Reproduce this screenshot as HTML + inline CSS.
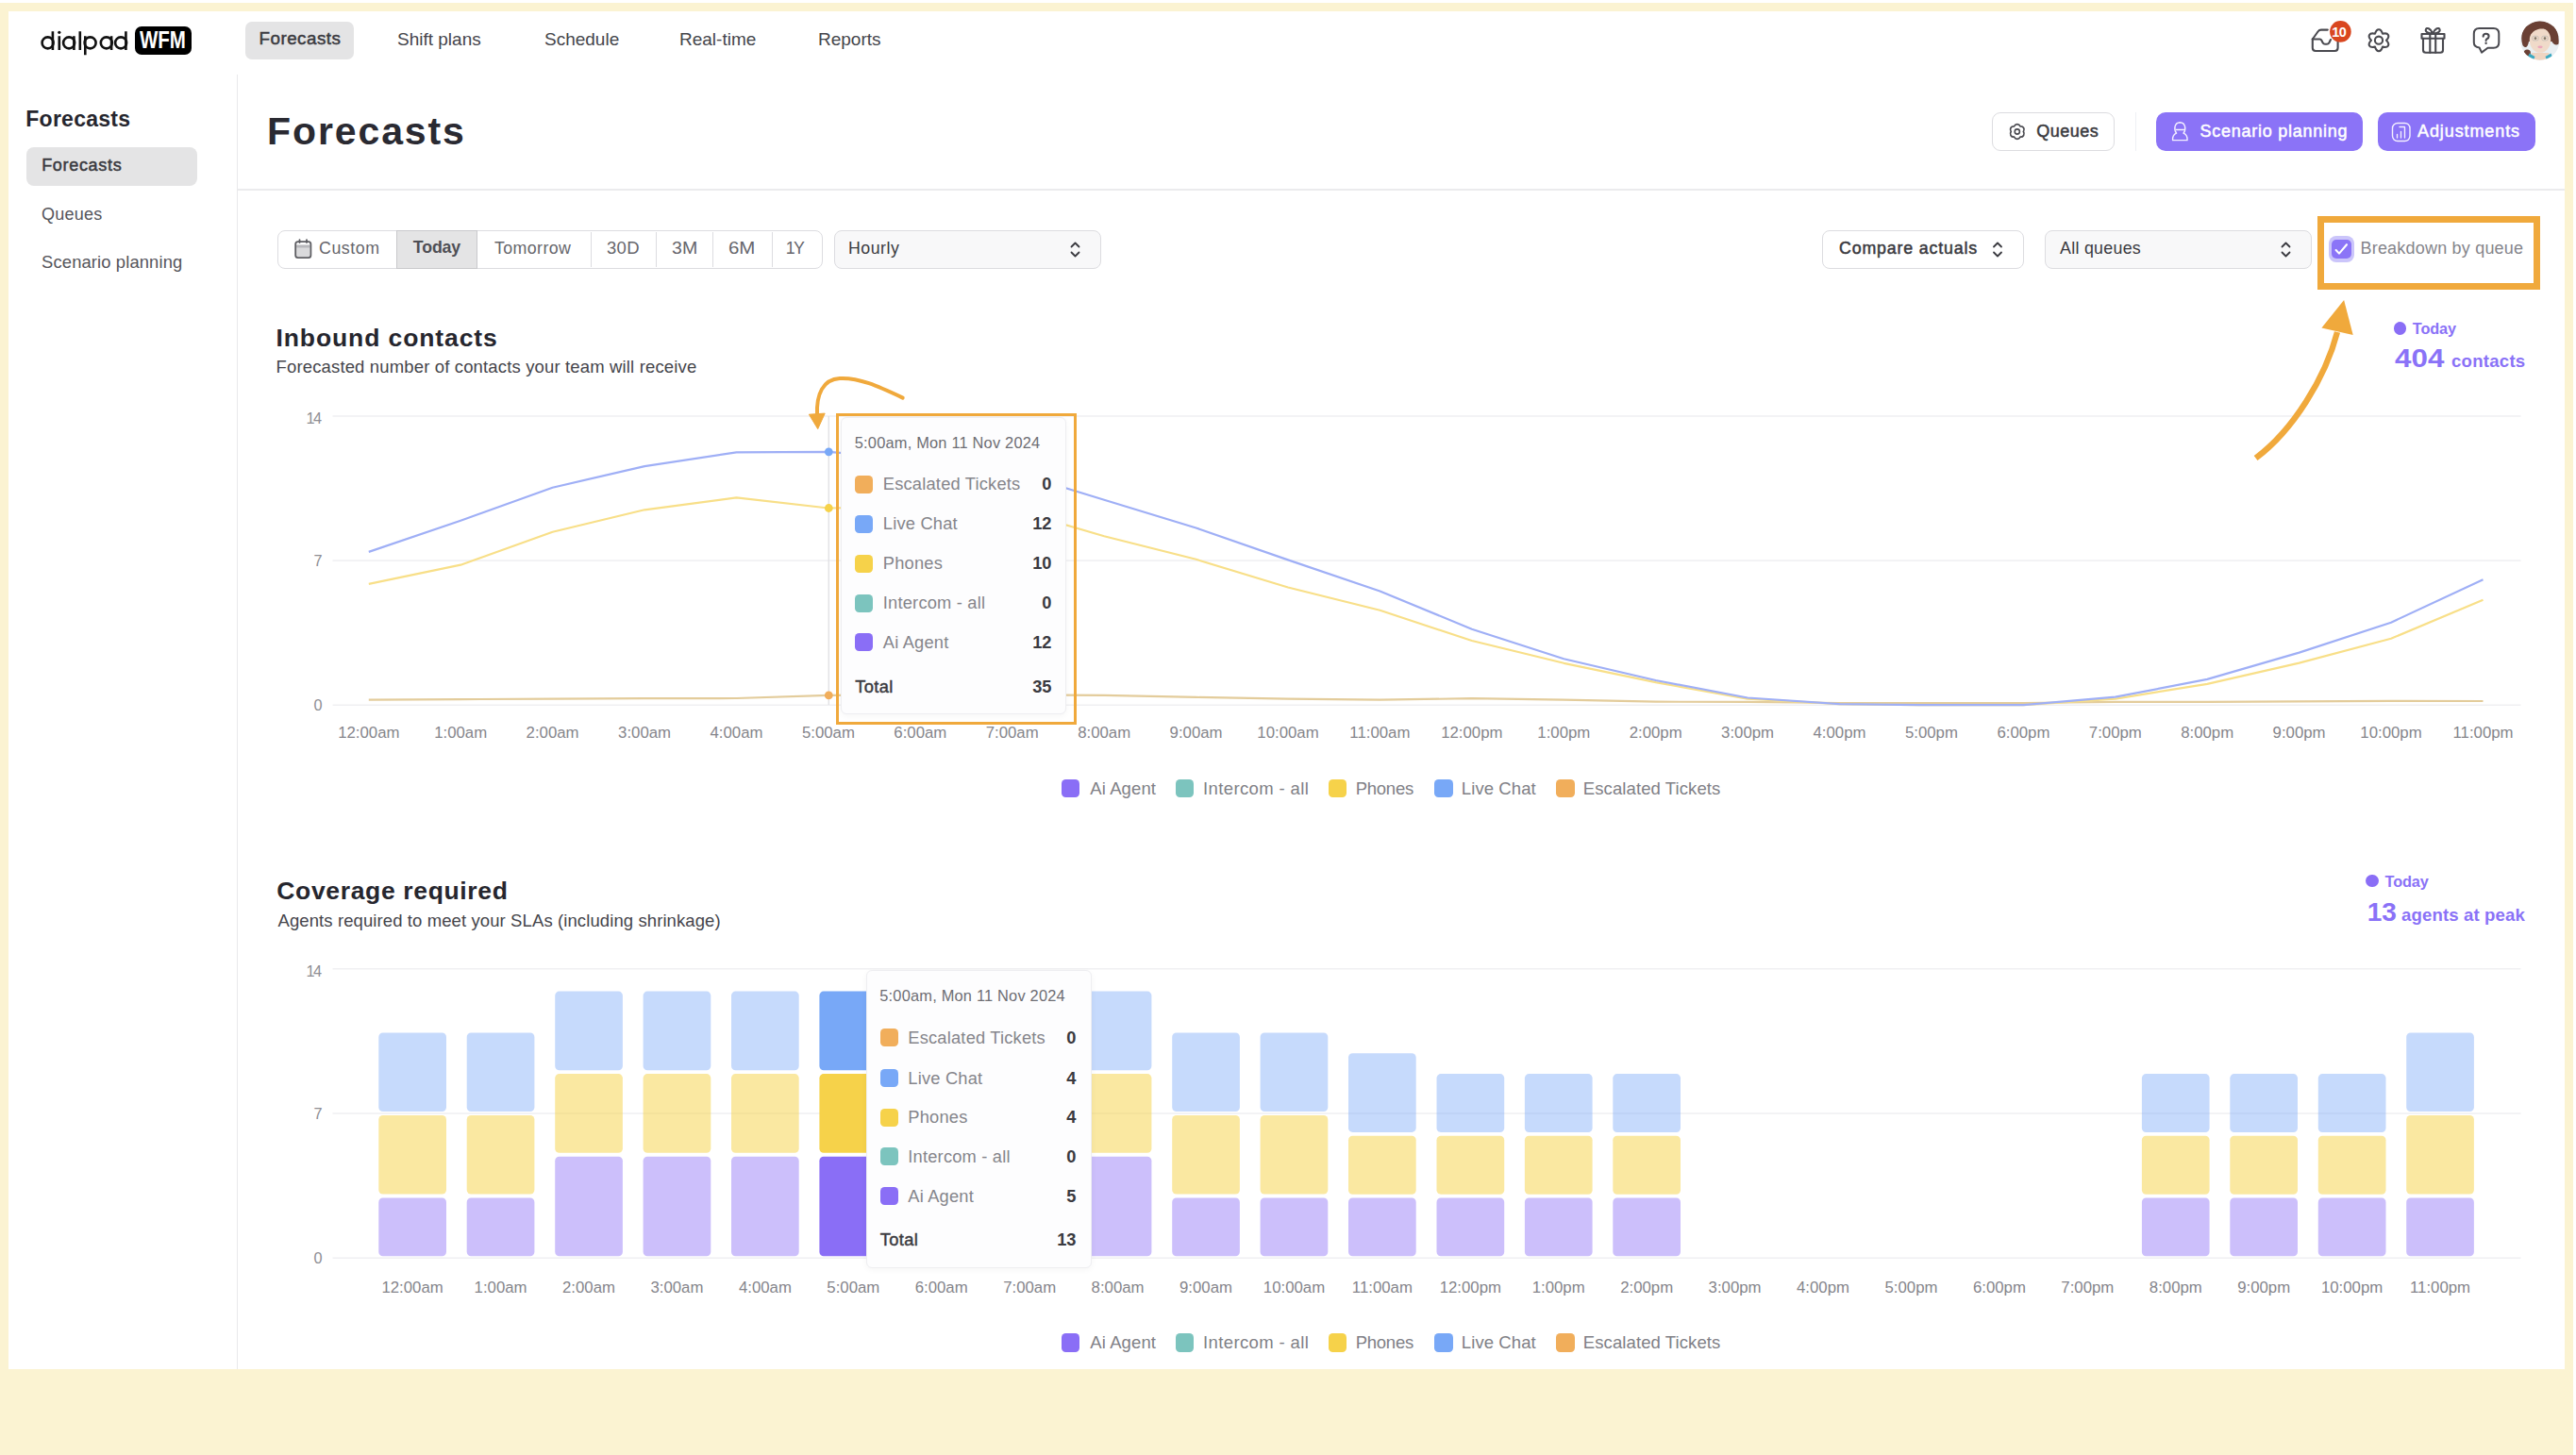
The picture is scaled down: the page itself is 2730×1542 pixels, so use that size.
<!DOCTYPE html><html><head><meta charset='utf-8'><title>Forecasts</title><style>
*{margin:0;padding:0;box-sizing:border-box}
html,body{width:2730px;height:1542px;overflow:hidden;background:#fff;font-family:"Liberation Sans",sans-serif}
.t{position:absolute;white-space:nowrap;line-height:1}
.r{position:absolute}
svg{position:absolute;left:0;top:0;overflow:visible}
</style></head><body><div class="r" style="left:0px;top:3px;width:2727px;height:1539px;background:#FBF3D2"></div>
<div class="r" style="left:9px;top:12px;width:2709px;height:1439px;background:#fff"></div>
<svg width="2730" height="1542"><g fill="none" stroke="#111" stroke-width="2.6"><circle cx="50.6" cy="45.4" r="6.0"/><circle cx="73.1" cy="45.4" r="6.0"/><circle cx="95.6" cy="45.4" r="6.0"/><circle cx="112.8" cy="45.4" r="6.0"/><circle cx="128.1" cy="45.4" r="6.0"/><path d="M55.9,33.2 L55.9,52.9 M62.8,38.2 L62.8,52.9 M78.4,38.2 L78.4,52.9 M84.8,33.2 L84.8,52.9 M90.3,38.2 L90.3,58.2 M118.1,38.2 L118.1,52.9 M133.4,33.2 L133.4,52.9"/></g><circle cx="62.8" cy="34.3" r="1.6" fill="#111"/></svg>
<div class="r" style="left:142.5px;top:27.5px;width:60.5px;height:30.5px;background:#000;border-radius:7px"></div>
<div class="t" style="left:148.0px;top:30.4px;font-size:25px;color:#fff;font-weight:700;transform:scaleX(0.82);transform-origin:0 0;">WFM</div>
<div class="r" style="left:259.5px;top:22.5px;width:115.5px;height:40.5px;background:#E4E4E5;border-radius:7px"></div>
<div class="t" style="left:274.5px;top:32.4px;font-size:18.8px;color:#3a3a40;letter-spacing:0.5px;-webkit-text-stroke:0.5px #3a3a40;">Forecasts</div>
<div class="t" style="left:421.0px;top:32.2px;font-size:19px;color:#45454b;">Shift plans</div>
<div class="t" style="left:577.0px;top:32.2px;font-size:19px;color:#45454b;">Schedule</div>
<div class="t" style="left:720.0px;top:32.2px;font-size:19px;color:#45454b;">Real-time</div>
<div class="t" style="left:867.0px;top:32.2px;font-size:19px;color:#45454b;">Reports</div>
<svg width="2730" height="1542"><g fill="none" stroke="#4a4a50" stroke-width="2.1" stroke-linecap="round" stroke-linejoin="round"><path d="M2450.8,41.5 L2450.8,50.8 Q2450.8,54 2454,54 L2474.4,54 Q2477.6,54 2477.6,50.8 L2477.6,43"/><path d="M2450.8,41.5 L2456.5,33.5 Q2457.8,31.6 2460,31.6 L2466.8,31.6"/><path d="M2450.8,41.5 L2458.6,41.5 Q2459.6,41.5 2460.2,42.6 L2461.6,45.3 Q2462.4,46.8 2464,46.8 L2466,46.8 Q2467.6,46.8 2468.4,45.3 L2470,42"/><path d="M2517.00,35.77 C2518.77,29.69 2523.23,29.69 2525.00,35.77 C2531.15,34.26 2533.38,38.13 2529.00,42.70 C2533.38,47.27 2531.15,51.14 2525.00,49.63 C2523.23,55.71 2518.77,55.71 2517.00,49.63 C2510.85,51.14 2508.62,47.27 2513.00,42.70 C2508.62,38.13 2510.85,34.26 2517.00,35.77 Z" stroke-width="2.1"/><circle cx="2521" cy="42.7" r="4.1"/><path d="M2566.5,36 L2590.5,36 L2590.5,40.8 L2566.5,40.8 Z"/><path d="M2568,40.8 L2568,53 Q2568,55.8 2570.8,55.8 L2586.2,55.8 Q2589,55.8 2589,53 L2589,40.8"/><path d="M2575.3,36 L2575.3,55.8 M2581.2,36 L2581.2,55.8"/><path d="M2578.2,35.5 C2576,30 2571.5,28.5 2570.8,31.5 C2570.2,34 2574,35.5 2578.2,35.5 C2582.4,35.5 2586.2,34 2585.6,31.5 C2584.9,28.5 2580.4,30 2578.2,35.5"/><path d="M2627.5,30 L2642.6,30 Q2648.3,30 2648.3,35.7 L2648.3,45 Q2648.3,50.7 2642.6,50.7 L2636.5,50.7 L2630,55.6 L2627.6,50.5 Q2621.8,49.8 2621.8,45 L2621.8,35.7 Q2621.8,30 2627.5,30 Z" stroke-width="2"/><path d="M2631.6,38.6 Q2631.8,35.8 2634.6,35.8 Q2637.6,35.8 2637.6,38.5 Q2637.6,40.3 2635.6,41.2 Q2634.6,41.8 2634.6,43" stroke-width="2.1"/></g><circle cx="2634.6" cy="45.8" r="1.2" fill="#4a4a50"/><circle cx="2480.4" cy="33.4" r="11.3" fill="#D9461F"/></svg>
<div class="t" style="left:2471.2px;top:26.6px;font-size:14.5px;color:#fff;font-weight:700;letter-spacing:-0.6px;">10</div>
<svg width="2730" height="1542"><defs><clipPath id="av"><circle cx="2691.8" cy="43" r="20.7"/></clipPath></defs><g clip-path="url(#av)"><rect x="2670" y="22" width="44" height="44" fill="#E9EFF2"/><path d="M2673.5,48 C2669.5,37 2675,23.5 2690,22.3 C2705,21.8 2713,31 2711.5,46.5 C2709.5,48.5 2706,47.5 2704.5,44 L2680,44 C2679,50 2676.5,52 2673.5,48 Z" fill="#6A4034"/><circle cx="2678.3" cy="56" r="3.6" fill="#6A4034"/><path d="M2680,66 L2683,56 L2701,56 L2705,66 Z" fill="#EFD5C2"/><path d="M2677,66 L2680.5,56.5 L2686.5,60 L2684,66 Z" fill="#3BA9C2"/><path d="M2707,66 L2703.5,56.5 L2697.5,60 L2700,66 Z" fill="#3BA9C2"/><ellipse cx="2692" cy="42.5" rx="11.2" ry="13.3" fill="#F0DAC9"/><path d="M2679.8,40 C2679,30 2685,26.5 2692,27 C2698,27.3 2703.5,30 2704.3,38 C2702.5,33 2699,30.6 2694,30.6 C2688,30.6 2684,33 2679.8,40 Z" fill="#6A4034"/><g fill="none" stroke="#C4BEB8" stroke-width="0.9"><rect x="2683.8" y="38.3" width="6.4" height="4.6" rx="1.6"/><rect x="2693.8" y="38.3" width="6.4" height="4.6" rx="1.6"/></g><circle cx="2687" cy="40.6" r="1.3" fill="#7d7566"/><circle cx="2697" cy="40.6" r="1.3" fill="#7d7566"/><ellipse cx="2692" cy="49.8" rx="2.7" ry="1.4" fill="#EDA7BC"/></g></svg>
<div class="r" style="left:250.8px;top:79px;width:1.1999999999999886px;height:1372px;background:#E9E9EB"></div>
<div class="t" style="left:27.3px;top:114.8px;font-size:23px;color:#26262e;font-weight:700;letter-spacing:0.25px;">Forecasts</div>
<div class="r" style="left:28px;top:155.5px;width:181px;height:41.0px;background:#E4E4E5;border-radius:8px"></div>
<div class="t" style="left:44.2px;top:166.0px;font-size:18px;color:#3a3a40;letter-spacing:0.68px;-webkit-text-stroke:0.5px #3a3a40;">Forecasts</div>
<div class="t" style="left:44.1px;top:218.1px;font-size:18px;color:#55555b;letter-spacing:0.2px;">Queues</div>
<div class="t" style="left:44.1px;top:268.7px;font-size:18.4px;color:#55555b;letter-spacing:0.12px;">Scenario planning</div>
<div class="r" style="left:252px;top:200px;width:2466px;height:1.5px;background:#EBEBED"></div>
<div class="t" style="left:283.0px;top:119.3px;font-size:41px;color:#2a2a32;font-weight:700;letter-spacing:1.9px;">Forecasts</div>
<div class="r" style="left:2111px;top:119.2px;width:130px;height:41.10000000000001px;border:1.5px solid #DCDCE0;border-radius:9px;background:#fff"></div>
<svg width="2730" height="1542"><path d="M2134.50,133.78 C2136.05,130.88 2139.55,130.88 2141.10,133.78 C2144.39,133.67 2146.14,136.70 2144.40,139.50 C2146.14,142.30 2144.39,145.33 2141.10,145.22 C2139.55,148.12 2136.05,148.12 2134.50,145.22 C2131.21,145.33 2129.46,142.30 2131.20,139.50 C2129.46,136.70 2131.21,133.67 2134.50,133.78 Z" fill="none" stroke="#4a4a50" stroke-width="1.7"/><circle cx="2137.8" cy="139.5" r="2.6" fill="none" stroke="#4a4a50" stroke-width="1.6"/></svg>
<div class="t" style="left:2158.2px;top:129.7px;font-size:18px;color:#3a3a40;letter-spacing:0.5px;-webkit-text-stroke:0.5px #3a3a40;">Queues</div>
<div class="r" style="left:2262.5px;top:119px;width:1.5px;height:41px;background:#EEF0F4"></div>
<div class="r" style="left:2285px;top:119px;width:219px;height:41.400000000000006px;background:#8B73F7;border-radius:10px"></div>
<div class="r" style="left:2519.5px;top:119px;width:167.5px;height:41.400000000000006px;background:#8B73F7;border-radius:10px"></div>
<div class="t" style="left:2331.5px;top:129.7px;font-size:18px;color:#fff;letter-spacing:0.74px;-webkit-text-stroke:0.5px #fff;">Scenario planning</div>
<div class="t" style="left:2562.0px;top:129.7px;font-size:18px;color:#fff;letter-spacing:0.9px;-webkit-text-stroke:0.5px #fff;">Adjustments</div>
<svg width="2730" height="1542"><g fill="none" stroke="#F4F0FF" stroke-width="1.4" stroke-linejoin="round" stroke-linecap="round"><path d="M2306.6,141.2 C2303.6,137.5 2304.2,130 2310.3,129.7 C2316.4,130 2317,137.5 2314,141.2 C2317.6,142.8 2318.3,145.8 2318,148.6 L2302.6,148.6 C2302.3,145.8 2303,142.8 2306.6,141.2 Z"/><path d="M2306.2,137.5 L2314.4,137.5"/></g></svg>
<svg width="2730" height="1542"><g fill="none" stroke="#F4F0FF" stroke-width="1.4" stroke-linecap="round"><rect x="2535.5" y="130.5" width="18.5" height="19" rx="5.5"/><path d="M2540.5,146 L2540.5,142.5 M2544.5,146 L2544.5,139.5 M2548.5,146 L2548.5,135 M2543,134.5 L2548.5,134.5"/></g></svg>
<div class="r" style="left:294px;top:244px;width:578px;height:40.5px;border:1.5px solid #DCDCE0;border-radius:8px;background:#fff;overflow:hidden"></div>
<div class="r" style="left:420.3px;top:243.8px;width:85.5px;height:41.0px;background:#E4E4E5;border:1.5px solid #C9C9CC"></div>
<div class="r" style="left:626px;top:245.5px;width:1.2999999999999545px;height:37.5px;background:#DCDCE0"></div>
<div class="r" style="left:695px;top:245.5px;width:1.2999999999999545px;height:37.5px;background:#DCDCE0"></div>
<div class="r" style="left:755px;top:245.5px;width:1.2999999999999545px;height:37.5px;background:#DCDCE0"></div>
<div class="r" style="left:817.5px;top:245.5px;width:1.2999999999999545px;height:37.5px;background:#DCDCE0"></div>
<svg width="2730" height="1542"><rect x="314" y="260.5" width="14.5" height="12" fill="#DADADC"/><rect x="314" y="259.5" width="14.5" height="3" fill="#B8B8BC"/><g fill="none" stroke="#5d5d62" stroke-width="1.8" stroke-linecap="round"><rect x="313.2" y="256.2" width="16.2" height="17" rx="2.6"/><path d="M317.5,254.2 L317.5,257 M325,254.2 L325,257"/></g></svg>
<div class="t" style="left:338.0px;top:254.5px;font-size:17.8px;color:#66666c;letter-spacing:0.55px;">Custom</div>
<div class="t" style="left:437.8px;top:254.2px;font-size:17.8px;color:#4f4f55;font-weight:700;letter-spacing:-0.15px;">Today</div>
<div class="t" style="left:524.0px;top:254.5px;font-size:17.8px;color:#66666c;letter-spacing:0.4px;">Tomorrow</div>
<div class="t" style="left:643.4px;top:254.5px;font-size:17.8px;color:#66666c;letter-spacing:0.3px;transform:scaleX(1.04);transform-origin:0 0;">30D</div>
<div class="t" style="left:712.1px;top:254.5px;font-size:17.8px;color:#66666c;transform:scaleX(1.1);transform-origin:0 0;">3M</div>
<div class="t" style="left:772.2px;top:254.5px;font-size:17.8px;color:#66666c;transform:scaleX(1.15);transform-origin:0 0;">6M</div>
<div class="t" style="left:832.8px;top:254.5px;font-size:17.8px;color:#66666c;letter-spacing:-1.8px;">1Y</div>
<div class="r" style="left:883.5px;top:244px;width:283.5px;height:40.5px;border:1.5px solid #DCDCE0;border-radius:8px;background:#F8F8F9"></div>
<div class="t" style="left:899.0px;top:254.5px;font-size:17.8px;color:#3a3a40;letter-spacing:0.5px;">Hourly</div>
<svg width="2730" height="1542"><path d="M1135.5,261.5 L1139.5,257.5 L1143.5,261.5 M1135.5,267.5 L1139.5,271.5 L1143.5,267.5" fill="none" stroke="#3a3a40" stroke-width="1.8" stroke-linecap="round" stroke-linejoin="round"/></svg>
<div class="r" style="left:1931px;top:244px;width:213.5px;height:40.5px;border:1.5px solid #DCDCE0;border-radius:8px;background:#fff"></div>
<div class="t" style="left:1949.0px;top:254.5px;font-size:17.8px;color:#3a3a40;letter-spacing:0.84px;-webkit-text-stroke:0.5px #3a3a40;">Compare actuals</div>
<svg width="2730" height="1542"><path d="M2113,261.5 L2117,257.5 L2121,261.5 M2113,267.5 L2117,271.5 L2121,267.5" fill="none" stroke="#3a3a40" stroke-width="1.8" stroke-linecap="round" stroke-linejoin="round"/></svg>
<div class="r" style="left:2166.5px;top:244px;width:283.0px;height:40.5px;border:1.5px solid #DCDCE0;border-radius:8px;background:#F8F8F9"></div>
<div class="t" style="left:2183.0px;top:254.5px;font-size:17.8px;color:#3a3a40;letter-spacing:0.3px;">All queues</div>
<svg width="2730" height="1542"><path d="M2418.5,261.5 L2422.5,257.5 L2426.5,261.5 M2418.5,267.5 L2422.5,271.5 L2426.5,267.5" fill="none" stroke="#3a3a40" stroke-width="1.8" stroke-linecap="round" stroke-linejoin="round"/></svg>
<div class="r" style="left:2467.8px;top:250.2px;width:27.199999999999818px;height:27.5px;background:#CBC5FA;border-radius:8px"></div>
<div class="r" style="left:2471.3px;top:253.7px;width:20.399999999999636px;height:20.600000000000023px;background:#8B74F7;border-radius:5px"></div>
<svg width="2730" height="1542"><path d="M2475.6,265 L2479,268.6 L2487,259.2" fill="none" stroke="#fff" stroke-width="2.1" stroke-linecap="round" stroke-linejoin="round"/></svg>
<div class="t" style="left:2501.5px;top:254.0px;font-size:18px;color:#85858b;letter-spacing:0.2px;">Breakdown by queue</div>
<div class="r" style="left:2455.5px;top:229.3px;width:236.5px;height:78.0px;border:7px solid #F0A93C"></div>
<div class="t" style="left:292.5px;top:345.1px;font-size:26.5px;color:#26262e;font-weight:700;letter-spacing:0.9px;">Inbound contacts</div>
<div class="t" style="left:292.5px;top:379.5px;font-size:18.5px;color:#45454b;letter-spacing:0.15px;">Forecasted number of contacts your team will receive</div>
<div class="r" style="left:2536.5px;top:341.2px;width:13.600000000000364px;height:13.600000000000023px;background:#8A6EF6;border-radius:50%"></div>
<div class="t" style="left:2556.8px;top:340.0px;font-size:16.3px;color:#8A72F7;font-weight:700;letter-spacing:-0.1px;">Today</div>
<div class="t" style="left:2537.5px;top:366.3px;font-size:28px;color:#8A72F7;font-weight:700;transform:scaleX(1.12);transform-origin:0 0;">404</div>
<div class="t" style="left:2598.0px;top:374.3px;font-size:18.6px;color:#8A72F7;font-weight:700;letter-spacing:0.25px;">contacts</div>
<svg width="2730" height="1542"><rect x="352.5" y="440.25" width="2319" height="1.5" fill="#F0F0F2"/><rect x="352.5" y="593.35" width="2319" height="1.5" fill="#F0F0F2"/><rect x="352.5" y="746.45" width="2319" height="1.5" fill="#F0F0F2"/></svg>
<div class="t" style="left:239px;width:100.5px;text-align:right;top:434.7px;font-size:16.3px;color:#8e8e94;letter-spacing:-1.6px">14</div>
<div class="t" style="left:241px;width:100.5px;text-align:right;top:585.6px;font-size:16.3px;color:#8e8e94;letter-spacing:0px">7</div>
<div class="t" style="left:241px;width:100.5px;text-align:right;top:739.2px;font-size:16.3px;color:#8e8e94;letter-spacing:0px">0</div>
<div class="t" style="left:330.8px;width:120px;text-align:center;top:769.0px;font-size:16.8px;color:#85858b">12:00am</div>
<div class="t" style="left:428.2px;width:120px;text-align:center;top:769.0px;font-size:16.8px;color:#85858b">1:00am</div>
<div class="t" style="left:525.6px;width:120px;text-align:center;top:769.0px;font-size:16.8px;color:#85858b">2:00am</div>
<div class="t" style="left:623.1px;width:120px;text-align:center;top:769.0px;font-size:16.8px;color:#85858b">3:00am</div>
<div class="t" style="left:720.5px;width:120px;text-align:center;top:769.0px;font-size:16.8px;color:#85858b">4:00am</div>
<div class="t" style="left:817.9px;width:120px;text-align:center;top:769.0px;font-size:16.8px;color:#85858b">5:00am</div>
<div class="t" style="left:915.3px;width:120px;text-align:center;top:769.0px;font-size:16.8px;color:#85858b">6:00am</div>
<div class="t" style="left:1012.7px;width:120px;text-align:center;top:769.0px;font-size:16.8px;color:#85858b">7:00am</div>
<div class="t" style="left:1110.2px;width:120px;text-align:center;top:769.0px;font-size:16.8px;color:#85858b">8:00am</div>
<div class="t" style="left:1207.6px;width:120px;text-align:center;top:769.0px;font-size:16.8px;color:#85858b">9:00am</div>
<div class="t" style="left:1305.0px;width:120px;text-align:center;top:769.0px;font-size:16.8px;color:#85858b">10:00am</div>
<div class="t" style="left:1402.4px;width:120px;text-align:center;top:769.0px;font-size:16.8px;color:#85858b">11:00am</div>
<div class="t" style="left:1499.8px;width:120px;text-align:center;top:769.0px;font-size:16.8px;color:#85858b">12:00pm</div>
<div class="t" style="left:1597.3px;width:120px;text-align:center;top:769.0px;font-size:16.8px;color:#85858b">1:00pm</div>
<div class="t" style="left:1694.7px;width:120px;text-align:center;top:769.0px;font-size:16.8px;color:#85858b">2:00pm</div>
<div class="t" style="left:1792.1px;width:120px;text-align:center;top:769.0px;font-size:16.8px;color:#85858b">3:00pm</div>
<div class="t" style="left:1889.5px;width:120px;text-align:center;top:769.0px;font-size:16.8px;color:#85858b">4:00pm</div>
<div class="t" style="left:1986.9px;width:120px;text-align:center;top:769.0px;font-size:16.8px;color:#85858b">5:00pm</div>
<div class="t" style="left:2084.4px;width:120px;text-align:center;top:769.0px;font-size:16.8px;color:#85858b">6:00pm</div>
<div class="t" style="left:2181.8px;width:120px;text-align:center;top:769.0px;font-size:16.8px;color:#85858b">7:00pm</div>
<div class="t" style="left:2279.2px;width:120px;text-align:center;top:769.0px;font-size:16.8px;color:#85858b">8:00pm</div>
<div class="t" style="left:2376.6px;width:120px;text-align:center;top:769.0px;font-size:16.8px;color:#85858b">9:00pm</div>
<div class="t" style="left:2474.0px;width:120px;text-align:center;top:769.0px;font-size:16.8px;color:#85858b">10:00pm</div>
<div class="t" style="left:2571.5px;width:120px;text-align:center;top:769.0px;font-size:16.8px;color:#85858b">11:00pm</div>
<svg width="2730" height="1542"><line x1="878.3" y1="441" x2="878.3" y2="747" stroke="#E2E2E5" stroke-width="1.5"/><polyline points="390.8,741.7 488.2,741.1 585.6,740.6 683.1,740.2 780.5,740.0 877.9,736.9 975.3,736.3 1072.7,736.3 1170.2,736.9 1267.6,738.9 1365.0,740.6 1462.4,741.7 1559.8,740.2 1657.3,741.7 1754.7,743.7 1852.1,743.9 1949.5,745.0 2046.9,745.0 2144.4,745.0 2241.8,743.9 2339.2,743.9 2436.6,743.3 2534.0,742.8 2631.5,743.0" fill="none" stroke="#E3CC9B" stroke-width="2.2" stroke-linejoin="round"/><polyline points="390.8,618.8 488.2,598.7 585.6,563.7 683.1,540.3 780.5,527.4 877.9,538.5 975.3,537.2 1072.7,539.6 1170.2,568.3 1267.6,592.8 1365.0,622.5 1462.4,646.8 1559.8,679.0 1657.3,702.8 1754.7,723.1 1852.1,740.6 1949.5,746.1 2046.9,747.2 2144.4,747.2 2241.8,740.6 2339.2,724.9 2436.6,702.6 2534.0,676.8 2631.5,635.7" fill="none" stroke="#F8DF88" stroke-width="2.2" stroke-linejoin="round"/><polyline points="390.8,584.9 488.2,551.7 585.6,516.7 683.1,494.1 780.5,479.3 877.9,478.8 975.3,486.9 1072.7,499.8 1170.2,529.8 1267.6,559.5 1365.0,593.4 1462.4,626.5 1559.8,666.7 1657.3,698.2 1754.7,721.0 1852.1,739.5 1949.5,746.1 2046.9,747.2 2144.4,747.2 2241.8,738.7 2339.2,719.9 2436.6,691.6 2534.0,659.7 2631.5,614.2" fill="none" stroke="#9FAFF6" stroke-width="2.2" stroke-linejoin="round"/><circle cx="878.3" cy="478.8" r="4.4" fill="#78A8F7"/><circle cx="878.3" cy="538.5" r="4.4" fill="#F6D24A"/><circle cx="878.3" cy="736.9" r="4.4" fill="#F1AE5B"/></svg>
<div class="r" style="left:1124.7px;top:825.6px;width:19.799999999999955px;height:19.799999999999955px;background:#8A6EF6;border-radius:4.5px"></div>
<div class="t" style="left:1155.3px;top:826.5px;font-size:18.5px;color:#808086;letter-spacing:0.1px;">Ai Agent</div>
<div class="r" style="left:1245.6px;top:825.6px;width:19.799999999999955px;height:19.799999999999955px;background:#7CC4BE;border-radius:4.5px"></div>
<div class="t" style="left:1275.0px;top:826.5px;font-size:18.5px;color:#808086;letter-spacing:0.38px;">Intercom - all</div>
<div class="r" style="left:1407.7px;top:825.6px;width:19.799999999999955px;height:19.799999999999955px;background:#F6D24A;border-radius:4.5px"></div>
<div class="t" style="left:1436.7px;top:826.5px;font-size:18.5px;color:#808086;letter-spacing:-0.25px;">Phones</div>
<div class="r" style="left:1519.8px;top:825.6px;width:19.799999999999955px;height:19.799999999999955px;background:#78A8F7;border-radius:4.5px"></div>
<div class="t" style="left:1548.8px;top:826.5px;font-size:18.5px;color:#808086;letter-spacing:0.1px;">Live Chat</div>
<div class="r" style="left:1649.3px;top:825.6px;width:19.799999999999955px;height:19.799999999999955px;background:#F1AE5B;border-radius:4.5px"></div>
<div class="t" style="left:1677.8px;top:826.5px;font-size:18.5px;color:#808086;letter-spacing:0.1px;">Escalated Tickets</div>
<div class="r" style="left:891.3px;top:441.8px;width:239.20000000000005px;height:315.7px;background:#FDFDFE;border:1px solid #EEEEF1;border-radius:6px;box-shadow:0 2px 6px rgba(0,0,0,0.04)"></div>
<div class="t" style="left:905.8px;top:461.1px;font-size:16.4px;color:#6e6e74;letter-spacing:0.2px;">5:00am, Mon 11 Nov 2024</div>
<div class="r" style="left:906.3px;top:503.79999999999995px;width:19.0px;height:19.0px;background:#F1AE5B;border-radius:4.5px"></div>
<div class="t" style="left:935.8px;top:504.3px;font-size:18.3px;color:#85858b;letter-spacing:0.2px;">Escalated Tickets</div>
<div class="t" style="left:1034.5px;width:80px;text-align:right;top:504.3px;font-size:18.3px;font-weight:700;color:#3a3a40">0</div>
<div class="r" style="left:906.3px;top:545.7px;width:19.0px;height:19.0px;background:#78A8F7;border-radius:4.5px"></div>
<div class="t" style="left:935.8px;top:546.2px;font-size:18.3px;color:#85858b;letter-spacing:0.2px;">Live Chat</div>
<div class="t" style="left:1034.5px;width:80px;text-align:right;top:546.2px;font-size:18.3px;font-weight:700;color:#3a3a40">12</div>
<div class="r" style="left:906.3px;top:587.6px;width:19.0px;height:19.0px;background:#F6D24A;border-radius:4.5px"></div>
<div class="t" style="left:935.8px;top:588.1px;font-size:18.3px;color:#85858b;letter-spacing:0.2px;">Phones</div>
<div class="t" style="left:1034.5px;width:80px;text-align:right;top:588.1px;font-size:18.3px;font-weight:700;color:#3a3a40">10</div>
<div class="r" style="left:906.3px;top:629.5px;width:19.0px;height:19.0px;background:#7CC4BE;border-radius:4.5px"></div>
<div class="t" style="left:935.8px;top:630.0px;font-size:18.3px;color:#85858b;letter-spacing:0.2px;">Intercom - all</div>
<div class="t" style="left:1034.5px;width:80px;text-align:right;top:630.0px;font-size:18.3px;font-weight:700;color:#3a3a40">0</div>
<div class="r" style="left:906.3px;top:671.4px;width:19.0px;height:19.0px;background:#8A6EF6;border-radius:4.5px"></div>
<div class="t" style="left:935.8px;top:671.9px;font-size:18.3px;color:#85858b;letter-spacing:0.2px;">Ai Agent</div>
<div class="t" style="left:1034.5px;width:80px;text-align:right;top:671.9px;font-size:18.3px;font-weight:700;color:#3a3a40">12</div>
<div class="t" style="left:906.3px;top:719.2px;font-size:18.3px;color:#3a3a40;letter-spacing:0.35px;-webkit-text-stroke:0.45px #3a3a40;">Total</div>
<div class="t" style="left:1034.5px;width:80px;text-align:right;top:719.2px;font-size:18.3px;font-weight:700;color:#3a3a40">35</div>
<div class="r" style="left:886.2px;top:438.2px;width:255.0px;height:329.50000000000006px;border:3.8px solid #F0A93C"></div>
<svg width="2730" height="1542"><path d="M956.7,421.6 C930,409 910,400 890,401 C872,402 865,418 866,440" fill="none" stroke="#F0A93C" stroke-width="4" stroke-linecap="round"/><path d="M857.4,439.2 L874.2,438.1 L866.7,454.6 Z" fill="#F0A93C" stroke="#F0A93C" stroke-width="1" stroke-linejoin="round"/><path d="M2390.6,485.6 C2430.6,455.6 2464.5,400 2477,352" fill="none" stroke="#F0A93C" stroke-width="6.3"/><path d="M2460.4,347.4 L2493.7,355 L2484.1,317.9 Z" fill="#F0A93C"/></svg>
<div class="t" style="left:293.3px;top:930.6px;font-size:26.5px;color:#26262e;font-weight:700;letter-spacing:0.65px;">Coverage required</div>
<div class="t" style="left:294.5px;top:967.3px;font-size:18.5px;color:#45454b;letter-spacing:0.1px;">Agents required to meet your SLAs (including shrinkage)</div>
<div class="r" style="left:2507.2px;top:926.9000000000001px;width:13.600000000000364px;height:13.599999999999909px;background:#8A6EF6;border-radius:50%"></div>
<div class="t" style="left:2527.5px;top:925.7px;font-size:16.3px;color:#8A72F7;font-weight:700;letter-spacing:-0.1px;">Today</div>
<div class="t" style="left:2508.8px;top:952.6px;font-size:28px;color:#8A72F7;font-weight:700;transform:scaleX(1.0);transform-origin:0 0;">13</div>
<div class="t" style="left:2545.0px;top:960.6px;font-size:18.6px;color:#8A72F7;font-weight:700;letter-spacing:0.12px;">agents at peak</div>
<svg width="2730" height="1542"><rect x="352.5" y="1026.05" width="2319" height="1.5" fill="#F0F0F2"/><rect x="352.5" y="1179.25" width="2319" height="1.5" fill="#F0F0F2"/><rect x="352.5" y="1332.45" width="2319" height="1.5" fill="#F0F0F2"/></svg>
<div class="t" style="left:239px;width:100.5px;text-align:right;top:1020.5px;font-size:16.3px;color:#8e8e94;letter-spacing:-1.6px">14</div>
<div class="t" style="left:241px;width:100.5px;text-align:right;top:1171.5px;font-size:16.3px;color:#8e8e94;letter-spacing:0px">7</div>
<div class="t" style="left:241px;width:100.5px;text-align:right;top:1325.2px;font-size:16.3px;color:#8e8e94;letter-spacing:0px">0</div>
<div class="t" style="left:377.1px;width:120px;text-align:center;top:1356.5px;font-size:16.8px;color:#85858b">12:00am</div>
<div class="t" style="left:470.6px;width:120px;text-align:center;top:1356.5px;font-size:16.8px;color:#85858b">1:00am</div>
<div class="t" style="left:564.0px;width:120px;text-align:center;top:1356.5px;font-size:16.8px;color:#85858b">2:00am</div>
<div class="t" style="left:657.4px;width:120px;text-align:center;top:1356.5px;font-size:16.8px;color:#85858b">3:00am</div>
<div class="t" style="left:750.9px;width:120px;text-align:center;top:1356.5px;font-size:16.8px;color:#85858b">4:00am</div>
<div class="t" style="left:844.3px;width:120px;text-align:center;top:1356.5px;font-size:16.8px;color:#85858b">5:00am</div>
<div class="t" style="left:937.7px;width:120px;text-align:center;top:1356.5px;font-size:16.8px;color:#85858b">6:00am</div>
<div class="t" style="left:1031.2px;width:120px;text-align:center;top:1356.5px;font-size:16.8px;color:#85858b">7:00am</div>
<div class="t" style="left:1124.6px;width:120px;text-align:center;top:1356.5px;font-size:16.8px;color:#85858b">8:00am</div>
<div class="t" style="left:1218.0px;width:120px;text-align:center;top:1356.5px;font-size:16.8px;color:#85858b">9:00am</div>
<div class="t" style="left:1311.5px;width:120px;text-align:center;top:1356.5px;font-size:16.8px;color:#85858b">10:00am</div>
<div class="t" style="left:1404.9px;width:120px;text-align:center;top:1356.5px;font-size:16.8px;color:#85858b">11:00am</div>
<div class="t" style="left:1498.3px;width:120px;text-align:center;top:1356.5px;font-size:16.8px;color:#85858b">12:00pm</div>
<div class="t" style="left:1591.7px;width:120px;text-align:center;top:1356.5px;font-size:16.8px;color:#85858b">1:00pm</div>
<div class="t" style="left:1685.2px;width:120px;text-align:center;top:1356.5px;font-size:16.8px;color:#85858b">2:00pm</div>
<div class="t" style="left:1778.6px;width:120px;text-align:center;top:1356.5px;font-size:16.8px;color:#85858b">3:00pm</div>
<div class="t" style="left:1872.0px;width:120px;text-align:center;top:1356.5px;font-size:16.8px;color:#85858b">4:00pm</div>
<div class="t" style="left:1965.5px;width:120px;text-align:center;top:1356.5px;font-size:16.8px;color:#85858b">5:00pm</div>
<div class="t" style="left:2058.9px;width:120px;text-align:center;top:1356.5px;font-size:16.8px;color:#85858b">6:00pm</div>
<div class="t" style="left:2152.3px;width:120px;text-align:center;top:1356.5px;font-size:16.8px;color:#85858b">7:00pm</div>
<div class="t" style="left:2245.8px;width:120px;text-align:center;top:1356.5px;font-size:16.8px;color:#85858b">8:00pm</div>
<div class="t" style="left:2339.2px;width:120px;text-align:center;top:1356.5px;font-size:16.8px;color:#85858b">9:00pm</div>
<div class="t" style="left:2432.6px;width:120px;text-align:center;top:1356.5px;font-size:16.8px;color:#85858b">10:00pm</div>
<div class="t" style="left:2526.0px;width:120px;text-align:center;top:1356.5px;font-size:16.8px;color:#85858b">11:00pm</div>
<svg width="2730" height="1542"><rect x="401.3" y="1269.4" width="71.7" height="61.9" rx="4.5" fill="#8A6EF6" fill-opacity="0.44"/><rect x="401.3" y="1181.9" width="71.7" height="83.7" rx="4.5" fill="#F6D24A" fill-opacity="0.52"/><rect x="401.3" y="1094.4" width="71.7" height="83.7" rx="4.5" fill="#78A8F7" fill-opacity="0.42"/><rect x="494.7" y="1269.4" width="71.7" height="61.9" rx="4.5" fill="#8A6EF6" fill-opacity="0.44"/><rect x="494.7" y="1181.9" width="71.7" height="83.7" rx="4.5" fill="#F6D24A" fill-opacity="0.52"/><rect x="494.7" y="1094.4" width="71.7" height="83.7" rx="4.5" fill="#78A8F7" fill-opacity="0.42"/><rect x="588.2" y="1225.7" width="71.7" height="105.6" rx="4.5" fill="#8A6EF6" fill-opacity="0.44"/><rect x="588.2" y="1138.1" width="71.7" height="83.7" rx="4.5" fill="#F6D24A" fill-opacity="0.52"/><rect x="588.2" y="1050.6" width="71.7" height="83.7" rx="4.5" fill="#78A8F7" fill-opacity="0.42"/><rect x="681.6" y="1225.7" width="71.7" height="105.6" rx="4.5" fill="#8A6EF6" fill-opacity="0.44"/><rect x="681.6" y="1138.1" width="71.7" height="83.7" rx="4.5" fill="#F6D24A" fill-opacity="0.52"/><rect x="681.6" y="1050.6" width="71.7" height="83.7" rx="4.5" fill="#78A8F7" fill-opacity="0.42"/><rect x="775.0" y="1225.7" width="71.7" height="105.6" rx="4.5" fill="#8A6EF6" fill-opacity="0.44"/><rect x="775.0" y="1138.1" width="71.7" height="83.7" rx="4.5" fill="#F6D24A" fill-opacity="0.52"/><rect x="775.0" y="1050.6" width="71.7" height="83.7" rx="4.5" fill="#78A8F7" fill-opacity="0.42"/><rect x="868.4" y="1225.7" width="71.7" height="105.6" rx="4.5" fill="#8A6EF6"/><rect x="868.4" y="1138.1" width="71.7" height="83.7" rx="4.5" fill="#F6D24A"/><rect x="868.4" y="1050.6" width="71.7" height="83.7" rx="4.5" fill="#78A8F7"/><rect x="961.9" y="1225.7" width="71.7" height="105.6" rx="4.5" fill="#8A6EF6" fill-opacity="0.44"/><rect x="961.9" y="1138.1" width="71.7" height="83.7" rx="4.5" fill="#F6D24A" fill-opacity="0.52"/><rect x="961.9" y="1050.6" width="71.7" height="83.7" rx="4.5" fill="#78A8F7" fill-opacity="0.42"/><rect x="1055.3" y="1225.7" width="71.7" height="105.6" rx="4.5" fill="#8A6EF6" fill-opacity="0.44"/><rect x="1055.3" y="1138.1" width="71.7" height="83.7" rx="4.5" fill="#F6D24A" fill-opacity="0.52"/><rect x="1055.3" y="1050.6" width="71.7" height="83.7" rx="4.5" fill="#78A8F7" fill-opacity="0.42"/><rect x="1148.7" y="1225.7" width="71.7" height="105.6" rx="4.5" fill="#8A6EF6" fill-opacity="0.44"/><rect x="1148.7" y="1138.1" width="71.7" height="83.7" rx="4.5" fill="#F6D24A" fill-opacity="0.52"/><rect x="1148.7" y="1050.6" width="71.7" height="83.7" rx="4.5" fill="#78A8F7" fill-opacity="0.42"/><rect x="1242.2" y="1269.4" width="71.7" height="61.9" rx="4.5" fill="#8A6EF6" fill-opacity="0.44"/><rect x="1242.2" y="1181.9" width="71.7" height="83.7" rx="4.5" fill="#F6D24A" fill-opacity="0.52"/><rect x="1242.2" y="1094.4" width="71.7" height="83.7" rx="4.5" fill="#78A8F7" fill-opacity="0.42"/><rect x="1335.6" y="1269.4" width="71.7" height="61.9" rx="4.5" fill="#8A6EF6" fill-opacity="0.44"/><rect x="1335.6" y="1181.9" width="71.7" height="83.7" rx="4.5" fill="#F6D24A" fill-opacity="0.52"/><rect x="1335.6" y="1094.4" width="71.7" height="83.7" rx="4.5" fill="#78A8F7" fill-opacity="0.42"/><rect x="1429.0" y="1269.4" width="71.7" height="61.9" rx="4.5" fill="#8A6EF6" fill-opacity="0.44"/><rect x="1429.0" y="1203.8" width="71.7" height="61.9" rx="4.5" fill="#F6D24A" fill-opacity="0.52"/><rect x="1429.0" y="1116.2" width="71.7" height="83.7" rx="4.5" fill="#78A8F7" fill-opacity="0.42"/><rect x="1522.5" y="1269.4" width="71.7" height="61.9" rx="4.5" fill="#8A6EF6" fill-opacity="0.44"/><rect x="1522.5" y="1203.8" width="71.7" height="61.9" rx="4.5" fill="#F6D24A" fill-opacity="0.52"/><rect x="1522.5" y="1138.1" width="71.7" height="61.9" rx="4.5" fill="#78A8F7" fill-opacity="0.42"/><rect x="1615.9" y="1269.4" width="71.7" height="61.9" rx="4.5" fill="#8A6EF6" fill-opacity="0.44"/><rect x="1615.9" y="1203.8" width="71.7" height="61.9" rx="4.5" fill="#F6D24A" fill-opacity="0.52"/><rect x="1615.9" y="1138.1" width="71.7" height="61.9" rx="4.5" fill="#78A8F7" fill-opacity="0.42"/><rect x="1709.3" y="1269.4" width="71.7" height="61.9" rx="4.5" fill="#8A6EF6" fill-opacity="0.44"/><rect x="1709.3" y="1203.8" width="71.7" height="61.9" rx="4.5" fill="#F6D24A" fill-opacity="0.52"/><rect x="1709.3" y="1138.1" width="71.7" height="61.9" rx="4.5" fill="#78A8F7" fill-opacity="0.42"/><rect x="2269.9" y="1269.4" width="71.7" height="61.9" rx="4.5" fill="#8A6EF6" fill-opacity="0.44"/><rect x="2269.9" y="1203.8" width="71.7" height="61.9" rx="4.5" fill="#F6D24A" fill-opacity="0.52"/><rect x="2269.9" y="1138.1" width="71.7" height="61.9" rx="4.5" fill="#78A8F7" fill-opacity="0.42"/><rect x="2363.3" y="1269.4" width="71.7" height="61.9" rx="4.5" fill="#8A6EF6" fill-opacity="0.44"/><rect x="2363.3" y="1203.8" width="71.7" height="61.9" rx="4.5" fill="#F6D24A" fill-opacity="0.52"/><rect x="2363.3" y="1138.1" width="71.7" height="61.9" rx="4.5" fill="#78A8F7" fill-opacity="0.42"/><rect x="2456.8" y="1269.4" width="71.7" height="61.9" rx="4.5" fill="#8A6EF6" fill-opacity="0.44"/><rect x="2456.8" y="1203.8" width="71.7" height="61.9" rx="4.5" fill="#F6D24A" fill-opacity="0.52"/><rect x="2456.8" y="1138.1" width="71.7" height="61.9" rx="4.5" fill="#78A8F7" fill-opacity="0.42"/><rect x="2550.2" y="1269.4" width="71.7" height="61.9" rx="4.5" fill="#8A6EF6" fill-opacity="0.44"/><rect x="2550.2" y="1181.9" width="71.7" height="83.7" rx="4.5" fill="#F6D24A" fill-opacity="0.52"/><rect x="2550.2" y="1094.4" width="71.7" height="83.7" rx="4.5" fill="#78A8F7" fill-opacity="0.42"/></svg>
<div class="r" style="left:917.8px;top:1028px;width:238.9000000000001px;height:315.70000000000005px;background:#FDFDFE;border:1px solid #EEEEF1;border-radius:6px;box-shadow:0 2px 6px rgba(0,0,0,0.04)"></div>
<div class="t" style="left:932.3px;top:1047.4px;font-size:16.4px;color:#6e6e74;letter-spacing:0.2px;">5:00am, Mon 11 Nov 2024</div>
<div class="r" style="left:932.8px;top:1090.3px;width:19.0px;height:19.0px;background:#F1AE5B;border-radius:4.5px"></div>
<div class="t" style="left:962.3px;top:1090.8px;font-size:18.3px;color:#85858b;letter-spacing:0.2px;">Escalated Tickets</div>
<div class="t" style="left:1060.5px;width:80px;text-align:right;top:1090.8px;font-size:18.3px;font-weight:700;color:#3a3a40">0</div>
<div class="r" style="left:932.8px;top:1133.3px;width:19.0px;height:19.0px;background:#78A8F7;border-radius:4.5px"></div>
<div class="t" style="left:962.3px;top:1133.8px;font-size:18.3px;color:#85858b;letter-spacing:0.2px;">Live Chat</div>
<div class="t" style="left:1060.5px;width:80px;text-align:right;top:1133.8px;font-size:18.3px;font-weight:700;color:#3a3a40">4</div>
<div class="r" style="left:932.8px;top:1174.5px;width:19.0px;height:19.0px;background:#F6D24A;border-radius:4.5px"></div>
<div class="t" style="left:962.3px;top:1175.0px;font-size:18.3px;color:#85858b;letter-spacing:0.2px;">Phones</div>
<div class="t" style="left:1060.5px;width:80px;text-align:right;top:1175.0px;font-size:18.3px;font-weight:700;color:#3a3a40">4</div>
<div class="r" style="left:932.8px;top:1216.1px;width:19.0px;height:19.0px;background:#7CC4BE;border-radius:4.5px"></div>
<div class="t" style="left:962.3px;top:1216.6px;font-size:18.3px;color:#85858b;letter-spacing:0.2px;">Intercom - all</div>
<div class="t" style="left:1060.5px;width:80px;text-align:right;top:1216.6px;font-size:18.3px;font-weight:700;color:#3a3a40">0</div>
<div class="r" style="left:932.8px;top:1258.0px;width:19.0px;height:19.0px;background:#8A6EF6;border-radius:4.5px"></div>
<div class="t" style="left:962.3px;top:1258.5px;font-size:18.3px;color:#85858b;letter-spacing:0.2px;">Ai Agent</div>
<div class="t" style="left:1060.5px;width:80px;text-align:right;top:1258.5px;font-size:18.3px;font-weight:700;color:#3a3a40">5</div>
<div class="t" style="left:932.8px;top:1305.0px;font-size:18.3px;color:#3a3a40;letter-spacing:0.35px;-webkit-text-stroke:0.45px #3a3a40;">Total</div>
<div class="t" style="left:1060.5px;width:80px;text-align:right;top:1305.0px;font-size:18.3px;font-weight:700;color:#3a3a40">13</div>
<div class="r" style="left:1124.7px;top:1412.8999999999999px;width:19.799999999999955px;height:19.800000000000182px;background:#8A6EF6;border-radius:4.5px"></div>
<div class="t" style="left:1155.3px;top:1413.8px;font-size:18.5px;color:#808086;letter-spacing:0.1px;">Ai Agent</div>
<div class="r" style="left:1245.6px;top:1412.8999999999999px;width:19.799999999999955px;height:19.800000000000182px;background:#7CC4BE;border-radius:4.5px"></div>
<div class="t" style="left:1275.0px;top:1413.8px;font-size:18.5px;color:#808086;letter-spacing:0.38px;">Intercom - all</div>
<div class="r" style="left:1407.7px;top:1412.8999999999999px;width:19.799999999999955px;height:19.800000000000182px;background:#F6D24A;border-radius:4.5px"></div>
<div class="t" style="left:1436.7px;top:1413.8px;font-size:18.5px;color:#808086;letter-spacing:-0.25px;">Phones</div>
<div class="r" style="left:1519.8px;top:1412.8999999999999px;width:19.799999999999955px;height:19.800000000000182px;background:#78A8F7;border-radius:4.5px"></div>
<div class="t" style="left:1548.8px;top:1413.8px;font-size:18.5px;color:#808086;letter-spacing:0.1px;">Live Chat</div>
<div class="r" style="left:1649.3px;top:1412.8999999999999px;width:19.799999999999955px;height:19.800000000000182px;background:#F1AE5B;border-radius:4.5px"></div>
<div class="t" style="left:1677.8px;top:1413.8px;font-size:18.5px;color:#808086;letter-spacing:0.1px;">Escalated Tickets</div></body></html>
